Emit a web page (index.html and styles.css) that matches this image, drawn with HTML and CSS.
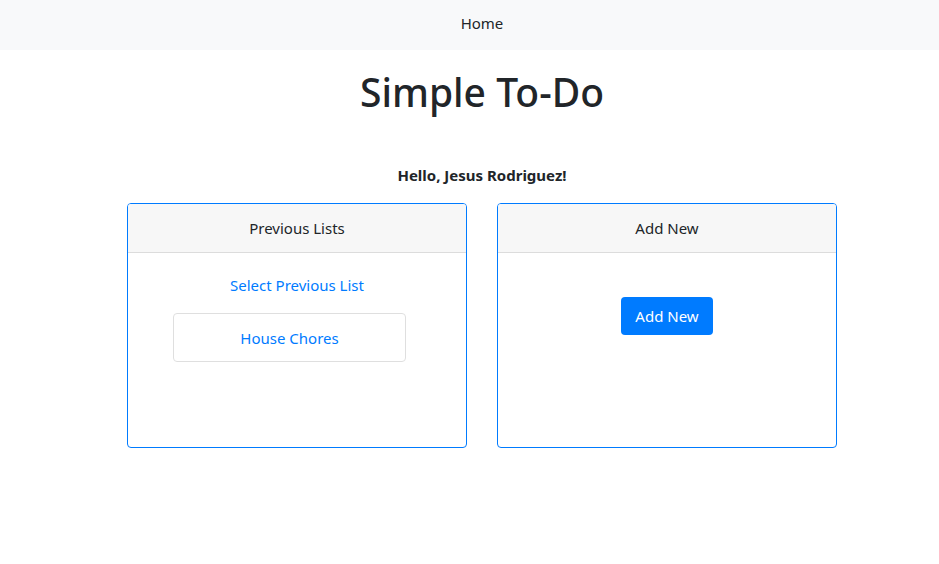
FILE: index.html
```html
<!DOCTYPE html>
<html>
<head>
<meta charset="utf-8">
<link rel="stylesheet" href="styles.css">
</head>
<body>
<nav class="navbar"><a class="nav-link" href="#">Home</a></nav>
<main class="main">
  <h1 class="title">Simple To-Do</h1>
  <p class="hello">Hello, Jesus Rodriguez!</p>
  <div class="cards">
    <section class="card">
      <div class="card-header">Previous Lists</div>
      <div class="card-body">
        <a class="link" href="#">Select Previous List</a>
        <div class="list-item"><a class="link" href="#">House Chores</a></div>
      </div>
    </section>
    <section class="card">
      <div class="card-header">Add New</div>
      <div class="card-body center">
        <button class="btn">Add New</button>
      </div>
    </section>
  </div>
</main>
</body>
</html>
```
FILE: styles.css
```css
* { box-sizing: border-box; }
html, body { margin: 0; padding: 0; }
body {
  font-family: "Noto Sans", "Open Sans", sans-serif;
  font-size: 15px;
  line-height: 24px;
  color: #212529;
  background: #fff;
}
.navbar {
  height: 50px;
  background: #f8f9fa;
  display: flex;
  align-items: center;
  justify-content: center;
  padding-left: 25px;
  padding-bottom: 4px;
}
.nav-link { color: #212529; text-decoration: none; }
.main {
  padding-left: 25px;
  display: flex;
  flex-direction: column;
  align-items: center;
}
.title {
  margin: 18px 0 0;
  font-size: 39px;
  line-height: 48px;
  font-weight: 500;
}
.hello {
  margin: 47px 0 0;
  font-weight: 700;
}
.cards {
  margin-top: 16px;
  display: flex;
  gap: 30px;
}
.card {
  width: 340px;
  height: 245px;
  border: 1px solid #007bff;
  border-radius: 4px;
  overflow: hidden;
  display: flex;
  flex-direction: column;
}
.card-header {
  height: 49px;
  display: flex;
  align-items: center;
  justify-content: center;
  background: #f7f7f7;
  border-bottom: 1px solid #dcdcdc;
}
.card-body {
  padding: 20px 20px;
  display: flex;
  flex-direction: column;
  align-items: center;
}
.link { color: #007bff; text-decoration: none; }
.list-item {
  margin-top: 16px;
  margin-right: 40px;
  margin-left: 25px;
  width: 233px;
  height: 49px;
  border: 1px solid #dfdfdf;
  border-radius: 4px;
  display: flex;
  align-items: center;
  justify-content: center;
}
.center { align-items: center; }
.btn {
  margin-top: 24px;
  width: 92px;
  height: 38px;
  background: #007bff;
  color: #fff;
  border: none;
  border-radius: 4px;
  font: inherit;
  font-size: 15px;
}
```
